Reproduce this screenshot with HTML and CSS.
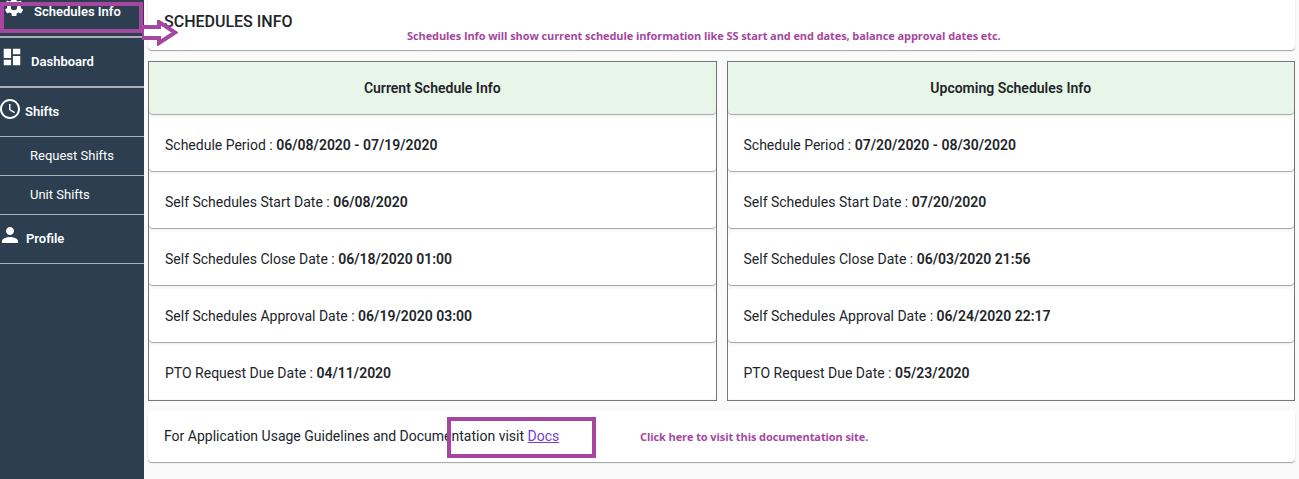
FILE: index.html
```html
<!doctype html>
<html lang="en">
<head>
	<meta charset="UTF-8">
	<title>Schedules Info</title>
	<link rel="stylesheet" href="styles.css">
</head>
<body>
<div class="app">
	<div class="side">
		<div class="nav nav-first">
			<svg class="ico ico-top" viewBox="0 0 24 24"><path fill-rule="evenodd" d="M19.4 13c0-.3.1-.6.1-1s0-.7-.1-1l2.100-1.600c.2-.2.2-.4.1-.6l-2-3.500c-.1-.2-.4-.3-.6-.2l-2.500 1c-.5-.4-1.100-.7-1.700-1l-.4-2.600c0-.2-.2-.4-.5-.4h-4c-.2 0-.4.2-.5.4l-.4 2.600c-.6.3-1.200.6-1.700 1l-2.500-1c-.2-.1-.5 0-.6.2l-2 3.500c-.1.2-.1.4.1.6L4.600 11c0 .3-.1.7-.1 1s0 .7.1 1l-2.100 1.600c-.2.2-.2.4-.1.6l2 3.500c.1.2.4.3.6.2l2.500-1c.5.4 1.100.7 1.700 1l.4 2.600c.1.2.3.4.5.4h4c.3 0 .5-.2.5-.4l.4-2.600c.6-.3 1.200-.6 1.700-1l2.500 1c.2.1.5 0 .6-.2l2-3.500c.1-.2.1-.4-.1-.6zM12 15.500a3.500 3.500 0 1 1 0-7 3.500 3.500 0 0 1 0 7z"/></svg>
			<span>Schedules Info</span>
		</div>
		<div class="nav nav-dash">
			<svg class="ico" viewBox="0 0 24 24"><path d="M3 13h8V3H3v10zm0 8h8v-6H3v6zm10 0h8V11h-8v10zm0-18v6h8V3h-8z"/></svg>
			<span>Dashboard</span>
		</div>
		<div class="nav nav-shifts">
			<svg class="ico" viewBox="0 0 24 24"><path d="M11.990 2C6.470 2 2 6.480 2 12s4.470 10 9.990 10C17.520 22 22 17.520 22 12S17.520 2 11.990 2zM12 20c-4.420 0-8-3.580-8-8s3.580-8 8-8 8 3.580 8 8-3.580 8-8 8zm.5-13H11v6l5.250 3.150.75-1.230-4.500-2.670z"/></svg>
			<span>Shifts</span>
		</div>
		<div class="nav sub">Request Shifts</div>
		<div class="nav sub">Unit Shifts</div>
		<div class="nav nav-profile">
			<svg class="ico" viewBox="0 0 24 24"><path d="M12 12c2.210 0 4-1.790 4-4s-1.790-4-4-4-4 1.790-4 4 1.790 4 4 4zm0 2c-2.670 0-8 1.340-8 4v2h16v-2c0-2.660-5.330-4-8-4z"/></svg>
			<span>Profile</span>
		</div>
	</div>
	<div class="main">
		<div class="box title-box">SCHEDULES INFO</div>
		<div class="cols">
			<div class="panel">
				<div class="row head">Current Schedule Info</div>
				<div class="row">Schedule Period :&nbsp;<b>06/08/2020 - 07/19/2020</b></div>
				<div class="row">Self Schedules Start Date :&nbsp;<b>06/08/2020</b></div>
				<div class="row">Self Schedules Close Date :&nbsp;<b>06/18/2020 01:00</b></div>
				<div class="row">Self Schedules Approval Date :&nbsp;<b>06/19/2020 03:00</b></div>
				<div class="row">PTO Request Due Date :&nbsp;<b>04/11/2020</b></div>
			</div>
			<div class="panel">
				<div class="row head">Upcoming Schedules Info</div>
				<div class="row">Schedule Period :&nbsp;<b>07/20/2020 - 08/30/2020</b></div>
				<div class="row">Self Schedules Start Date :&nbsp;<b>07/20/2020</b></div>
				<div class="row">Self Schedules Close Date :&nbsp;<b>06/03/2020 21:56</b></div>
				<div class="row">Self Schedules Approval Date :&nbsp;<b>06/24/2020 22:17</b></div>
				<div class="row">PTO Request Due Date :&nbsp;<b>05/23/2020</b></div>
			</div>
		</div>
		<div class="box docs-box">For Application Usage Guidelines and Documentation visit&nbsp;<a href="#">Docs</a></div>
	</div>
</div>

<!-- annotations drawn over the page -->
<div class="mark mark-nav"></div>
<svg class="arrow" viewBox="0 0 36 26"><path d="M0 7h17V2l16 10.500L17 23v-5H0z"/></svg>
<div class="note note-top">Schedules Info will show current schedule information like SS start and end dates, balance approval dates etc.</div>
<div class="mark mark-docs"></div>
<div class="note note-docs">Click here to visit this documentation site.</div>
</body>
</html>
```

FILE: styles.css
```css
*{
	box-sizing: border-box;
}
html,body{
	margin: 0;
	height: 100%;
	overflow: hidden;
}
body{
	background-color: #fafafa;
	font-family: Roboto, "Liberation Sans", sans-serif;
	font-size: 14px;
	color: #212529;
}
.app{
	display: flex;
	height: 479px;
}
.side{
	width: 144px;
	flex: none;
	background-color: #2c3e50;
	color: #fff;
}
.nav{
	display: flex;
	align-items: center;
	border-bottom: 1px solid #a9b0b7;
	font-weight: 600;
	font-size: 13px;
}
.nav-first{
	height: 38px;
	padding: 0 0 14px 3px;
	border-bottom-width: 2px;
	gap: 9px;
}
.nav-first .ico{
	margin-top: -8px;
}
.nav-dash{
	height: 50px;
	border-bottom-width: 2px;
	padding: 0 0 2px 1px;
	gap: 8px;
}
.nav-dash .ico{
	margin-top: -9px;
}
.nav-shifts{
	height: 49px;
	gap: 3px;
	padding-bottom: 1px;
}
.nav-shifts .ico{
	margin: -6px 0 0 -2px;
	width: 24px;
	height: 24px;
}
.nav-profile{
	height: 49px;
	gap: 4px;
	padding-bottom: 1px;
}
.nav-profile .ico{
	margin: -7px 0 0 -2px;
	width: 24px;
	height: 24px;
}
.sub{
	height: 39px;
	padding: 0 0 2px 30px;
	font-weight: 400;
}
.ico{
	width: 22px;
	height: 22px;
	flex: none;
	fill: #fff;
}
.main{
	flex: 1;
	padding: 0 4px 0 4px;
	min-width: 0;
}
.box{
	background-color: #fff;
	border-radius: 0 0 4px 4px;
	box-shadow: 0 1px 1px rgba(0,0,0,.35);
	padding: 0 16px;
}
.title-box{
	height: 50px;
	padding-top: 12px;
	font-size: 16px;
	font-weight: 500;
}
.cols{
	display: flex;
	gap: 10px;
	margin-top: 11px;
}
.panel{
	flex: 1;
	height: 340px;
	border: 1px solid #777;
}
.row{
	display: flex;
	align-items: center;
	height: 53px;
	margin-bottom: 4px;
	padding: 0 16px;
	background-color: #fff;
	border-radius: 4px;
	box-shadow: 0 1px 1px rgba(0,0,0,.35);
	white-space: pre;
}
.row:last-child{
	margin-bottom: 0;
	box-shadow: none;
}
.row b{
	font-weight: 600;
}
.head{
	justify-content: center;
	height: 52px;
	background-color: #e8f5e9;
	font-weight: 600;
	border-radius: 0 0 4px 4px;
}
.docs-box{
	display: flex;
	align-items: center;
	height: 51px;
	margin-top: 10px;
	padding-bottom: 1px;
	border-radius: 4px;
	white-space: pre;
}
.docs-box a{
	color: #7040d8;
}
.mark{
	position: absolute;
	border: 4px solid #a5479f;
}
.mark-nav{
	left: 0;
	top: 2px;
	width: 143px;
	height: 31px;
}
.mark-docs{
	left: 447px;
	top: 417px;
	width: 149px;
	height: 41px;
}
.arrow{
	position: absolute;
	left: 142px;
	top: 20px;
	width: 36px;
	height: 26px;
	fill: #fff;
	stroke: #a5479f;
	stroke-width: 4;
}
.note{
	position: absolute;
	font-family: "Open Sans", sans-serif;
	font-weight: 700;
	font-size: 11px;
	letter-spacing: -.09px;
	color: #a5479f;
	white-space: nowrap;
}
.note-top{
	left: 407px;
	top: 28px;
}
.note-docs{
	left: 640px;
	top: 429px;
}
```
